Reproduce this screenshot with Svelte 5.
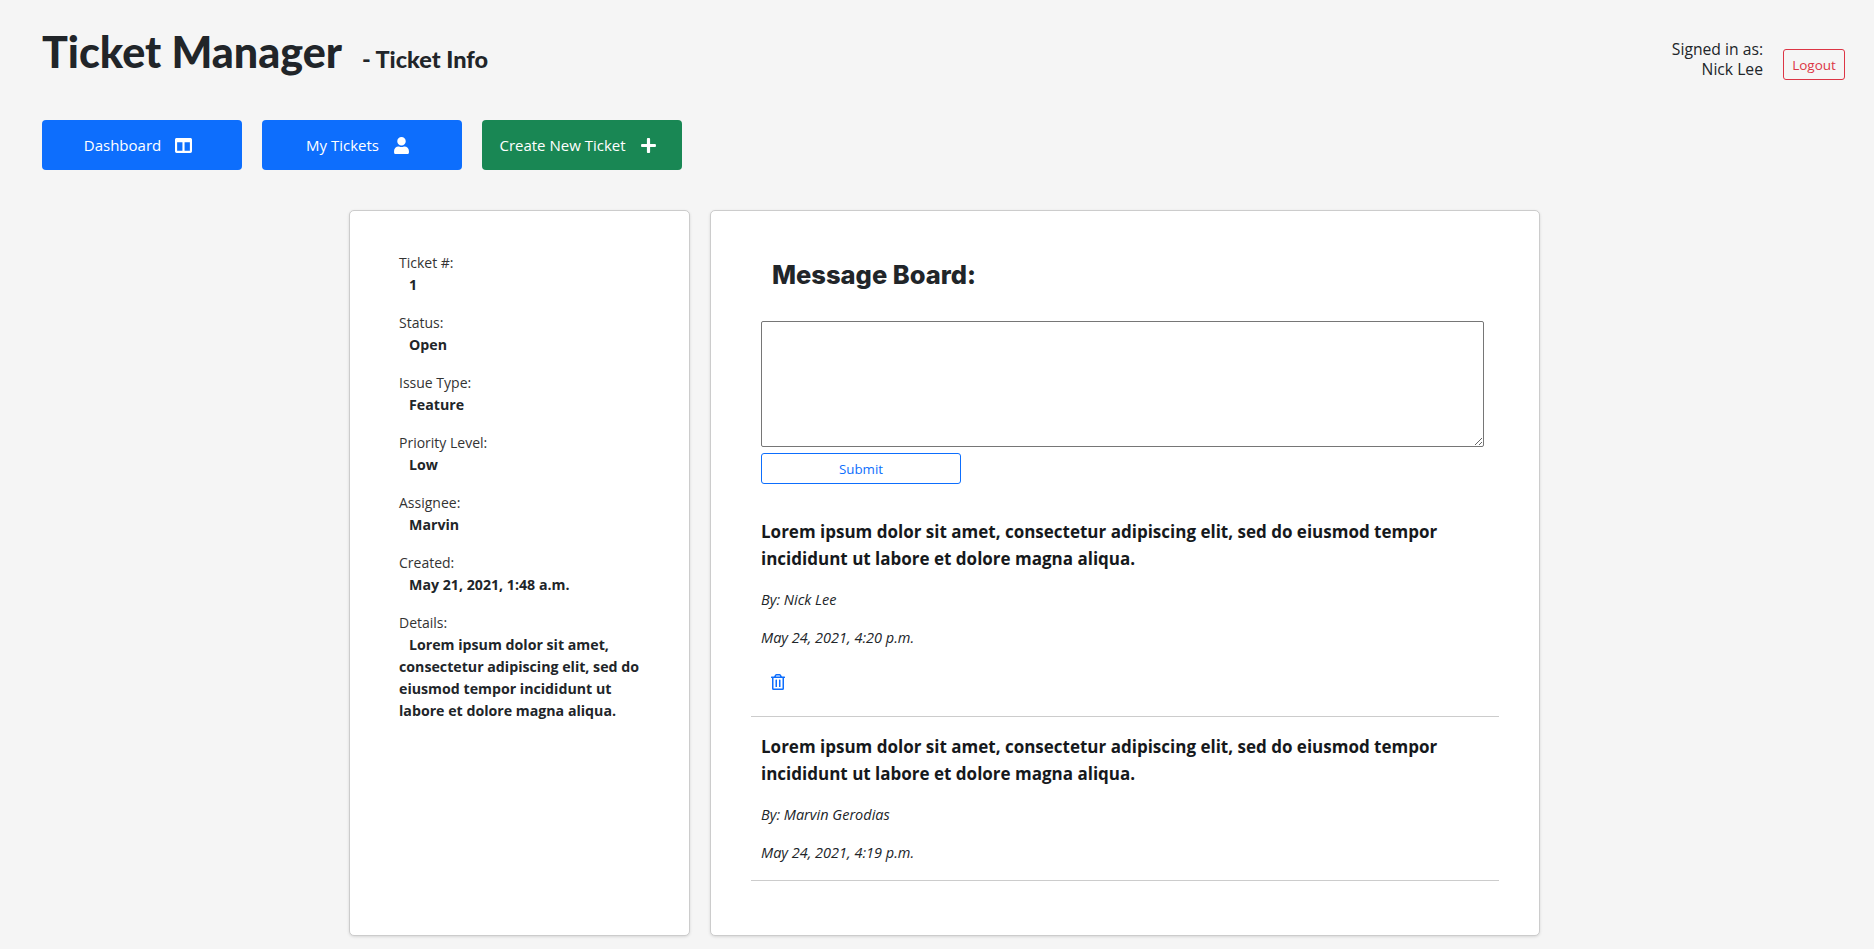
<script>
  // --- DATA ---
  const navLinks = [
    { label: 'Dashboard', icon: 'columns', kind: 'primary' },
    { label: 'My Tickets', icon: 'user', kind: 'primary' },
    { label: 'Create New Ticket', icon: 'plus', kind: 'success' }
  ];

  const icons = {
    columns: { box: '0 0 512 512', d: 'M464 32H48C21.49 32 0 53.49 0 80v352c0 26.51 21.49 48 48 48h416c26.51 0 48-21.49 48-48V80c0-26.51-21.49-48-48-48zM224 416H64V160h160v256zm224 0H288V160h160v256z' },
    user: { box: '0 0 448 512', d: 'M224 256c70.7 0 128-57.3 128-128S294.7 0 224 0 96 57.3 96 128s57.3 128 128 128zm89.6 32h-16.7c-22.2 10.2-46.9 16-72.9 16s-50.6-5.8-72.9-16h-16.7C60.2 288 0 348.2 0 422.4V464c0 26.5 21.5 48 48 48h352c26.5 0 48-21.5 48-48v-41.6c0-74.2-60.2-134.4-134.4-134.4z' },
    plus: { box: '0 0 448 512', d: 'M416 208H272V64c0-17.67-14.33-32-32-32h-32c-17.67 0-32 14.33-32 32v144H32c-17.67 0-32 14.33-32 32v32c0 17.67 14.33 32 32 32h144v144c0 17.67 14.33 32 32 32h32c17.67 0 32-14.33 32-32V304h144c17.67 0 32-14.33 32-32v-32c0-17.67-14.33-32-32-32z' },
    trash: { box: '0 0 448 512', d: 'M268 416h24a12 12 0 0 0 12-12V188a12 12 0 0 0-12-12h-24a12 12 0 0 0-12 12v216a12 12 0 0 0 12 12zM432 80h-82.41l-34-56.7A48 48 0 0 0 274.41 0H173.59a48 48 0 0 0-41.16 23.3L98.41 80H16A16 16 0 0 0 0 96v16a16 16 0 0 0 16 16h16v336a48 48 0 0 0 48 48h288a48 48 0 0 0 48-48V128h16a16 16 0 0 0 16-16V96a16 16 0 0 0-16-16zM171.84 50.91A6 6 0 0 1 177 48h94a6 6 0 0 1 5.15 2.91L293.61 80H154.39zM368 464H80V128h288zm-212-48h24a12 12 0 0 0 12-12V188a12 12 0 0 0-12-12h-24a12 12 0 0 0-12 12v216a12 12 0 0 0 12 12z' }
  };

  const lorem = 'Lorem ipsum dolor sit amet, consectetur adipiscing elit, sed do eiusmod tempor incididunt ut labore et dolore magna aliqua.';

  const fields = [
    { label: 'Ticket #:', value: '1' },
    { label: 'Status:', value: 'Open' },
    { label: 'Issue Type:', value: 'Feature' },
    { label: 'Priority Level:', value: 'Low' },
    { label: 'Assignee:', value: 'Marvin' },
    { label: 'Created:', value: 'May 21, 2021, 1:48 a.m.' },
    { label: 'Details:', value: lorem }
  ];

  const messages = [
    { author: 'Nick Lee', date: 'May 24, 2021, 4:20 p.m.', own: true },
    { author: 'Marvin Gerodias', date: 'May 24, 2021, 4:19 p.m.', own: false }
  ];
</script>

<div class="page">
  <header class="top">
    <div class="titles">
      <h1>Ticket Manager</h1>
      <h2>- Ticket Info</h2>
    </div>
    <div class="account">
      <div class="who">Signed in as:<br />Nick Lee</div>
      <button class="logout">Logout</button>
    </div>
  </header>

  <nav class="links">
    {#each navLinks as link}
      <a href="#top" class="nav-btn {link.kind}">
        {link.label}
        <svg class="nav-icon" viewBox={icons[link.icon].box} aria-hidden="true"><path d={icons[link.icon].d} /></svg>
      </a>
    {/each}
  </nav>

  <main class="board">
    <section class="card info">
      {#each fields as field}
        <div class="field">
          <div class="label">{field.label}</div>
          <div class="value">{field.value}</div>
        </div>
      {/each}
    </section>

    <section class="card messages">
      <h3>Message Board:</h3>
      <form class="reply" on:submit|preventDefault>
        <textarea aria-label="Message"></textarea>
        <button class="submit">Submit</button>
      </form>

      {#each messages as msg}
        <article class="msg">
          <p class="body">{lorem}</p>
          <p class="meta">By: {msg.author}</p>
          <p class="meta">{msg.date}</p>
          {#if msg.own}
            <button class="trash" aria-label="Delete message">
              <svg viewBox={icons.trash.box} aria-hidden="true"><path d={icons.trash.d} /></svg>
            </button>
          {/if}
        </article>
      {/each}
    </section>
  </main>
</div>

<style>
  :global(body) {
    background: #f5f5f5;
    color: #212529;
    font-family: "Open Sans", "Noto Sans", sans-serif;
  }

  .page {
    height: 949px;
    box-sizing: border-box;
    overflow: hidden;
  }

  .top {
    display: flex;
    justify-content: space-between;
    padding: 26px 29px 0 42px;
    height: 120px;
    box-sizing: border-box;
  }

  .titles {
    display: flex;
    align-items: baseline;
    gap: 20px;
  }

  h1 {
    margin: 0;
    font-family: "Lato", sans-serif;
    font-size: 43px;
    font-weight: 900;
    line-height: 52px;
  }

  h2 {
    margin: 0;
    font-family: "Lato", sans-serif;
    font-size: 23.5px;
    font-weight: 900;
  }

  .account {
    display: flex;
    align-items: flex-start;
    gap: 20px;
    padding-top: 14px;
  }

  .who {
    font-size: 15.7px;
    line-height: 19.5px;
    text-align: right;
  }

  .logout {
    width: 62px;
    height: 31px;
    margin-top: 9px;
    padding: 0;
    background: transparent;
    border: 1px solid #dc3545;
    border-radius: 3px;
    color: #dc3545;
    font-family: inherit;
    font-size: 13.5px;
  }

  .links {
    display: flex;
    gap: 20px;
    padding-left: 42px;
    height: 50px;
  }

  .nav-btn {
    box-sizing: border-box;
    width: 200px;
    height: 50px;
    padding-right: 8px;
    display: flex;
    align-items: center;
    justify-content: center;
    gap: 14px;
    border-radius: 4px;
    color: #fff;
    font-size: 15px;
    text-decoration: none;
  }
  .nav-btn.primary { background: #0d6efd; }
  .nav-btn.success { background: #198754; }

  .nav-icon {
    width: 17px;
    height: 17px;
    fill: #fff;
  }

  .board {
    display: flex;
    gap: 20px;
    margin: 40px 0 0 349px;
    height: 726px;
  }

  .card {
    box-sizing: border-box;
    background: #fff;
    border: 1px solid #ccc;
    border-radius: 5px;
    box-shadow: 0 1px 3px rgba(0, 0, 0, 0.12);
  }

  .info {
    width: 341px;
    padding: 41px 40px 0 49px;
  }

  .field {
    margin-bottom: 16px;
    font-size: 14px;
    line-height: 22px;
  }

  .label { color: #333; }

  .value {
    font-size: 14.2px;
    font-weight: 700;
    text-indent: 10px;
  }

  .messages {
    width: 830px;
    padding: 49px 40px 0 50px;
  }

  h3 {
    margin: 0 0 31px 11px;
    font-family: "Inter", sans-serif;
    font-size: 25.5px;
    font-weight: 800;
    line-height: 30px;
  }

  .reply {
    display: flex;
    flex-direction: column;
    align-items: flex-start;
    gap: 6px;
    margin-bottom: 34px;
  }

  textarea {
    box-sizing: border-box;
    width: 723px;
    height: 126px;
    border: 1px solid #767676;
    border-radius: 2px;
    outline: none;
  }

  .submit {
    width: 200px;
    height: 31px;
    padding: 0;
    background: #fff;
    border: 1px solid #0d6efd;
    border-radius: 3px;
    color: #0d6efd;
    font-family: inherit;
    font-size: 13.3px;
  }

  .msg {
    margin: 0 0 16px -10px;
    padding: 0 10px;
    width: 748px;
    box-sizing: border-box;
    border-bottom: 1px solid #ccc;
  }

  .body {
    margin: 0 0 17px;
    font-size: 17px;
    font-weight: 700;
    line-height: 27px;
    color: #16191c;
  }

  .meta {
    margin: 0 0 16px;
    font-size: 14.5px;
    font-style: italic;
    line-height: 22px;
  }

  .trash {
    display: block;
    margin: 0 0 17px;
    padding: 9px 10px;
    background: none;
    border: none;
    height: 34px;
  }

  .trash svg {
    display: block;
    width: 14px;
    height: 16px;
    fill: #0d6efd;
  }
</style>
